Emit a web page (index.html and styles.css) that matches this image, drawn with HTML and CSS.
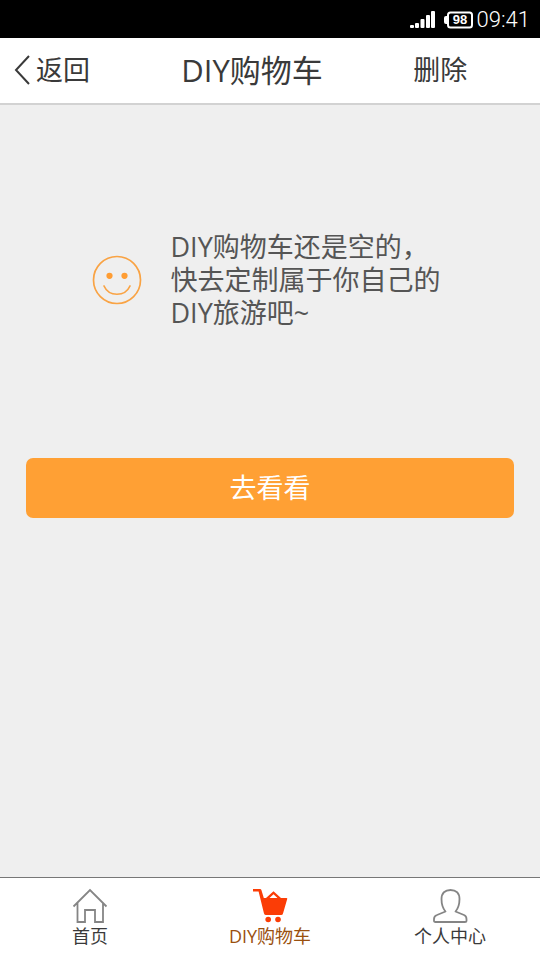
FILE: index.html
```html
<!DOCTYPE html>
<html lang="zh-CN">
<head>
<meta charset="utf-8">
<meta name="viewport" content="width=device-width, initial-scale=1">
<title>DIY购物车</title>
<link rel="stylesheet" href="styles.css">
</head>
<body>
<div class="status">
  <svg width="26" height="18" viewBox="0 0 26 18" fill="#fff" aria-hidden="true">
    <rect x="0" y="14" width="4" height="3" rx="1"/><rect x="5" y="12" width="4" height="5" rx="1"/><rect x="10.500" y="8" width="4" height="9" rx="1"/><rect x="16" y="4" width="4" height="13" rx="1"/><rect x="21" y="0" width="4" height="17" rx="1"/>
  </svg>
  <span class="battery">
    <svg width="29" height="18" viewBox="0 0 29 18" fill="none" aria-hidden="true">
      <path d="M3 5H2Q0 5 0 7V11Q0 13 2 13H3Z" fill="#fff"/><rect x="4" y="1.500" width="24" height="15" rx="2.500" stroke="#fff" stroke-width="2"/>
    </svg>
    <span class="battery-level">98</span>
  </span>
  <time class="clock">09:41</time>
</div>
<header class="header">
  <button class="back" type="button">
    <svg width="17" height="30" viewBox="0 0 17 30" fill="none" stroke="#3a3a3a" stroke-width="2" aria-hidden="true"><path d="M15 1L2 15L15 29"/></svg>
    <span>返回</span>
  </button>
  <h1 class="title">DIY购物车</h1>
  <button class="delete" type="button">删除</button>
</header>
<main class="main">
  <section class="empty">
    <svg width="50" height="50" viewBox="0 0 50 50" fill="none" stroke="#f9a344" stroke-width="1.700" stroke-linecap="round" aria-hidden="true">
      <circle cx="25" cy="25" r="23.500"/><path d="M12 31C17 42 33 42 38 31"/>
      <g fill="#ff9d33" stroke="none"><circle cx="17.500" cy="20.800" r="3.100"/><circle cx="32.500" cy="20.800" r="3.100"/></g>
    </svg>
    <p class="message">DIY购物车还是空的，<br>快去定制属于你自己的<br>DIY旅游吧~</p>
  </section>
  <button class="browse" type="button">去看看</button>
</main>
<nav class="tabs">
  <a class="tab" href="#home">
    <svg width="36" height="36" viewBox="0 0 36 36" fill="none" stroke="#858585" stroke-width="1.800" aria-hidden="true"><path d="M1.500 18.500L18 2L34.500 18.500M5.500 15V34H13V22H23V34H31V15"/></svg>
    <span>首页</span>
  </a>
  <a class="tab active" href="#cart" aria-current="page">
    <svg width="36" height="36" viewBox="0 0 36 36" fill="#fb3d06" aria-hidden="true">
      <path d="M1 1H8Q9 1 9.400 2L11.800 10H14L21.500 3.200L29 10H34.500Q35.500 10 35.200 11L31 25.500Q30.700 27 29 27H14Q12.500 27 12 25.500L6.600 3.500H1ZM17.500 10H25.500L21.500 6.300Z"/>
      <circle cx="16.200" cy="31.500" r="2.800"/><circle cx="26" cy="31.500" r="2.800"/>
    </svg>
    <span>DIY购物车</span>
  </a>
  <a class="tab" href="#profile">
    <svg width="36" height="36" viewBox="0 0 36 36" fill="none" stroke="#858585" stroke-width="1.800" stroke-linejoin="round" aria-hidden="true"><path d="M13.500 23.500C10.500 20 9.500 16 9.500 11C9.500 5 13 2 18.500 2S27.500 5 27.500 11C27.500 16 26.500 20 23.500 23.500L32 27Q34.500 28 34.500 31V33Q34.500 34 33 34H3.500Q2 34 2 33V31Q2 28 5 27Z"/></svg>
    <span>个人中心</span>
  </a>
</nav>
</body>
</html>
```
FILE: styles.css
```css
* {
  box-sizing: border-box;
}

body {
  margin: 0;
  min-height: 100vh;
  display: flex;
  flex-direction: column;
  background: #efefef;
  color: #3a3a3a;
  font-family: "Open Sans", "Noto Sans CJK SC", sans-serif;
}

button {
  border: 0;
  padding: 0;
  background: none;
  color: inherit;
  font: inherit;
  cursor: pointer;
}

.status {
  display: flex;
  align-items: center;
  justify-content: flex-end;
  gap: 8px;
  height: 38px;
  padding: 2px 10px 0 0;
  background: #000;
  color: #fff;
}

.battery {
  position: relative;
  display: flex;
}

.battery-level {
  position: absolute;
  inset: 0 0 0 4px;
  text-align: center;
  font: bold 13px/18px "Liberation Sans", sans-serif;
}

.clock {
  margin-left: -4px;
  font: 22px/28px Roboto, sans-serif;
  font-weight: 300;
}

.header {
  display: grid;
  grid-template-columns: 1fr auto 1fr;
  align-items: center;
  height: 67px;
  padding: 0 14px 2px;
  background: #fff;
  border-bottom: 2px solid #d2d2d2;
  font-size: 27px;
  line-height: 36px;
}

.back {
  display: flex;
  align-items: center;
  gap: 5px;
}

.title {
  margin: 0 36px 0 0;
  font-size: 31px;
  font-weight: 400;
  line-height: 40px;
}

.delete {
  justify-self: center;
  padding-right: 4px;
}

.main {
  flex: 1;
  padding: 125px 26px 0;
}

.empty {
  display: flex;
  align-items: center;
  justify-content: center;
  gap: 29px;
  padding-right: 8px;
  color: #555;
}

.message {
  margin: 0;
  font-size: 27px;
  line-height: 33px;
}

.browse {
  display: block;
  width: 100%;
  height: 60px;
  margin-top: 129px;
  padding-bottom: 4px;
  border-radius: 7px;
  background: #ffa034;
  color: #fff;
  font-size: 27px;
}

.tabs {
  display: grid;
  grid-template-columns: repeat(3, 1fr);
  height: 83px;
  padding-top: 10px;
  background: #fff;
  border-top: 1px solid #777;
}

.tab {
  display: flex;
  flex-direction: column;
  align-items: center;
  color: #3a3a3a;
  font-size: 18px;
  line-height: 24px;
  text-decoration: none;
}

.active {
  color: #9a500f;
}
```
